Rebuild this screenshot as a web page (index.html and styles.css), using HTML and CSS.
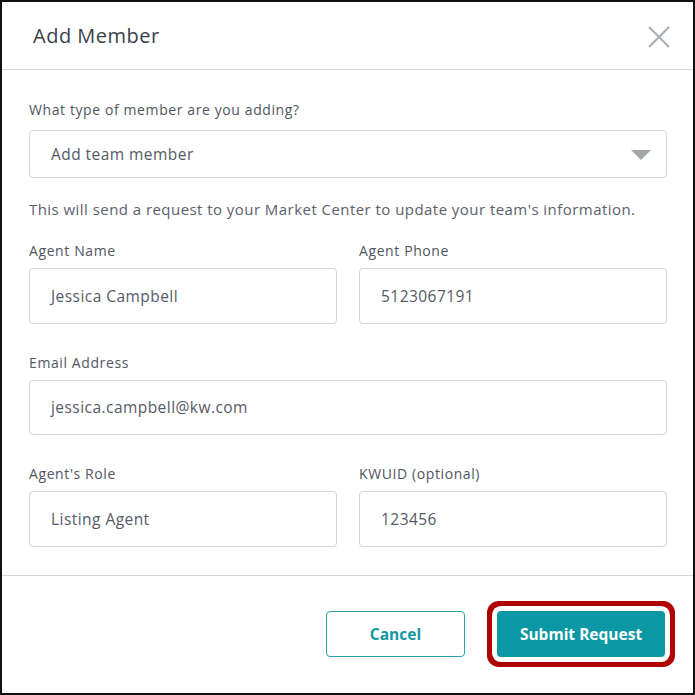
FILE: index.html
```html
<!DOCTYPE html>
<html lang="en">
<head>
    <meta charset="UTF-8">
    <title>Add Member</title>
    <link rel="stylesheet" href="styles.css">
</head>
<body>
    <div class="modal">
        <div class="modal-header">
            <h2 class="modal-title">Add Member</h2>
            <svg class="close-icon" width="22" height="22" viewBox="0 0 22 22">
                <path d="M1 1 L21 21 M21 1 L1 21" stroke="#a9adb3" stroke-width="2" fill="none"/>
            </svg>
        </div>
        <div class="modal-body">
            <div class="label">What type of member are you adding?</div>
            <div class="select">
                <span>Add team member</span>
                <svg class="arrow" width="20" height="10" viewBox="0 0 20 10">
                    <path d="M0 0 L20 0 L10 10 Z" fill="#a3a6ab"/>
                </svg>
            </div>
            <p class="note">This will send a request to your Market Center to update your team's information.</p>
            <div class="fields">
                <div class="field">
                    <div class="label">Agent Name</div>
                    <div class="input">Jessica Campbell</div>
                </div>
                <div class="field">
                    <div class="label">Agent Phone</div>
                    <div class="input">5123067191</div>
                </div>
                <div class="field wide">
                    <div class="label">Email Address</div>
                    <div class="input">jessica.campbell@kw.com</div>
                </div>
                <div class="field">
                    <div class="label">Agent's Role</div>
                    <div class="input">Listing Agent</div>
                </div>
                <div class="field">
                    <div class="label">KWUID (optional)</div>
                    <div class="input">123456</div>
                </div>
            </div>
        </div>
        <div class="modal-footer">
            <button class="btn btn-cancel">Cancel</button>
            <button class="btn btn-submit">Submit Request</button>
        </div>
    </div>
</body>
</html>
```

FILE: styles.css
```css
* {
    box-sizing: border-box;
}
body {
    margin: 0;
    font-family: "Open Sans", Lato, sans-serif;
    background-color: #fff;
}
.modal {
    width: 695px;
    height: 695px;
    border: 2px solid #111;
    display: flex;
    flex-direction: column;
    background-color: #fff;
}
.modal-header {
    height: 68px;
    display: flex;
    align-items: center;
    justify-content: space-between;
    padding: 0 23px 0 31px;
    border-bottom: 1px solid #d5d8dc;
}
.modal-title {
    margin: 0;
    font-size: 20px;
    font-weight: 500;
    letter-spacing: 0.5px;
    color: #3a3f4d;
}
.close-icon {
    margin-top: 2px;
}
.modal-body {
    padding: 30px 26px 28px 27px;
    border-bottom: 1px solid #d5d8dc;
}
.label {
    font-size: 14px;
    line-height: 20px;
    letter-spacing: 0.6px;
    color: #4f5561;
}
.select {
    margin-top: 10px;
    height: 48px;
    border: 1px solid #d3d6da;
    border-radius: 4px;
    display: flex;
    align-items: center;
    justify-content: space-between;
    padding: 0 15px 0 21px;
    font-size: 15.5px;
    letter-spacing: 0.45px;
    color: #555a66;
}
.arrow {
    margin-top: 2px;
}
.note {
    margin: 21px 0 22px;
    font-size: 15px;
    line-height: 20px;
    letter-spacing: 0.45px;
    color: #5b606b;
}
.fields {
    display: grid;
    grid-template-columns: 1fr 1fr;
    column-gap: 22px;
    row-gap: 29px;
}
.field.wide {
    grid-column: 1 / 3;
}
.input {
    margin-top: 7px;
    height: 55.5px;
    border: 1px solid #d3d6da;
    border-radius: 4px;
    display: flex;
    align-items: center;
    padding: 0 21px;
    font-size: 15.5px;
    letter-spacing: 0.45px;
    color: #555a66;
}
.modal-footer {
    display: flex;
    justify-content: flex-end;
    align-items: flex-start;
    gap: 32px;
    padding: 35px 28px 0 0;
}
.btn {
    height: 46px;
    border-radius: 4px;
    font-family: "Open Sans", Lato, sans-serif;
    font-size: 15.5px;
    font-weight: 700;
    cursor: pointer;
}
.btn-cancel {
    width: 139px;
    background-color: #fff;
    border: 1px solid #2aa2ad;
    color: #1597a3;
}
.btn-submit {
    width: 168px;
    background-color: #0b98a4;
    border: none;
    color: #fff;
    box-shadow: 0 0 0 5px #fff, 0 0 0 10px #b00000;
}
```
